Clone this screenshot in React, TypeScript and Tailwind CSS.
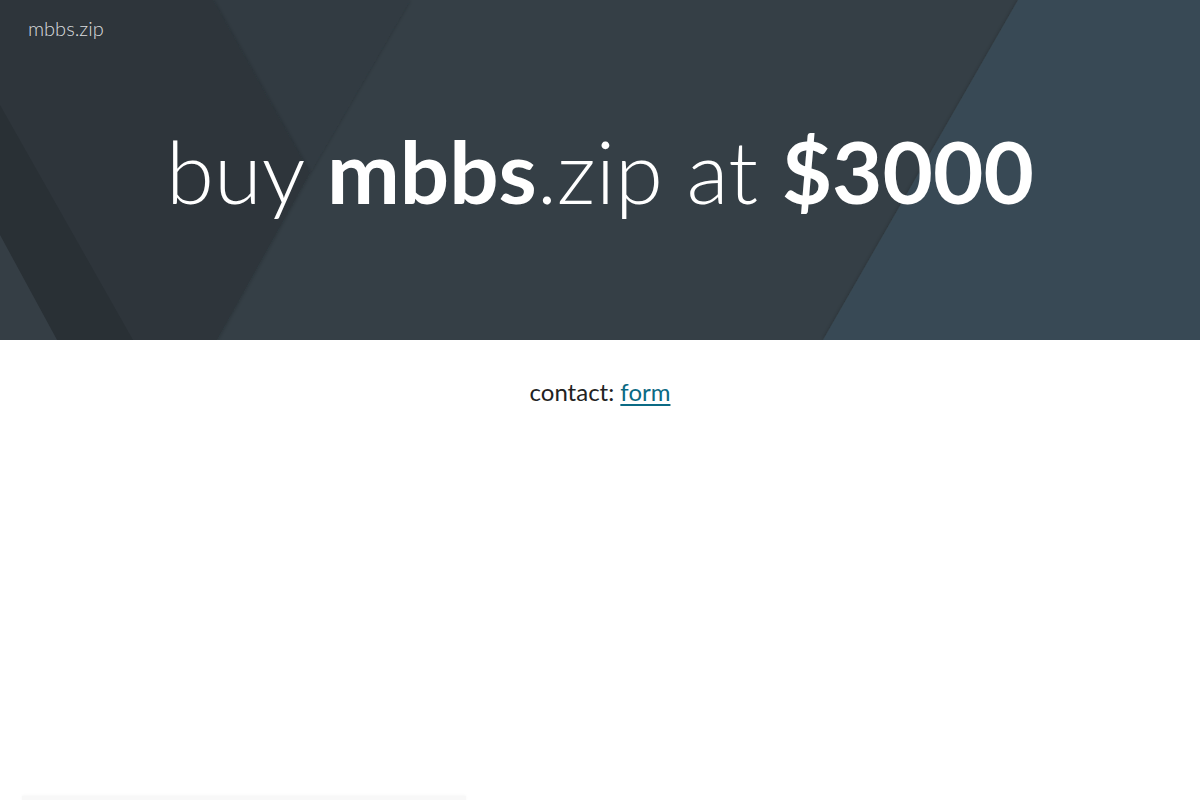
import React from "react";

export default function App() {
  return (
    <div className="min-h-[800px] w-full bg-white overflow-hidden relative" style={{ fontFamily: "Lato, 'Open Sans', sans-serif" }}>
      <header className="relative h-[340px] w-full overflow-hidden bg-[#363f47]">
        <svg className="absolute inset-0 h-full w-full" viewBox="0 0 1200 340" preserveAspectRatio="none" aria-hidden="true">
          <defs>
            <filter id="sh" x="-10%" y="-10%" width="120%" height="120%">
              <feDropShadow dx="0" dy="0" stdDeviation="2" floodColor="#000" floodOpacity="0.25" />
            </filter>
          </defs>
          <rect x="0" y="0" width="1200" height="340" fill="#353f46" />
          <polygon points="1018,0 1200,0 1200,340 823,340" fill="#394a54" filter="url(#sh)" />
          <polygon points="213,0 410,0 310,173" fill="#323b42" filter="url(#sh)" />
          <polygon points="0,0 213,0 310,173 217,340 0,340" fill="#2d353b" filter="url(#sh)" />
          <polygon points="0,105 133,340 57,340 0,235" fill="#293035" />
          <polygon points="0,235 57,340 0,340" fill="#353e45" />
        </svg>
        <div className="relative h-full flex flex-col">
          <div className="px-[28px] pt-[15px] text-[20px] font-light text-[#dadcde] leading-[26px]">mbbs.zip</div>
          <div className="flex-1 flex items-center justify-center pb-[40px]">
            <h1 className="text-[87px] leading-none text-white font-light">
              buy <span className="font-bold">mbbs</span>.zip at <span className="font-bold">$3000</span>
            </h1>
          </div>
        </div>
      </header>
      <main className="pt-[36px] flex justify-center">
        <p className="text-[24px] text-[#222] leading-[32px]">
          contact: <a href="#" className="text-[#0b6a84] underline underline-offset-[3px]">form</a>
        </p>
      </main>
      <div className="absolute left-[22px] top-[796px] w-[444px] h-[6px] bg-[#f8f8f8] shadow-[0_-1px_3px_rgba(0,0,0,0.03)]" />
    </div>
  );
}
